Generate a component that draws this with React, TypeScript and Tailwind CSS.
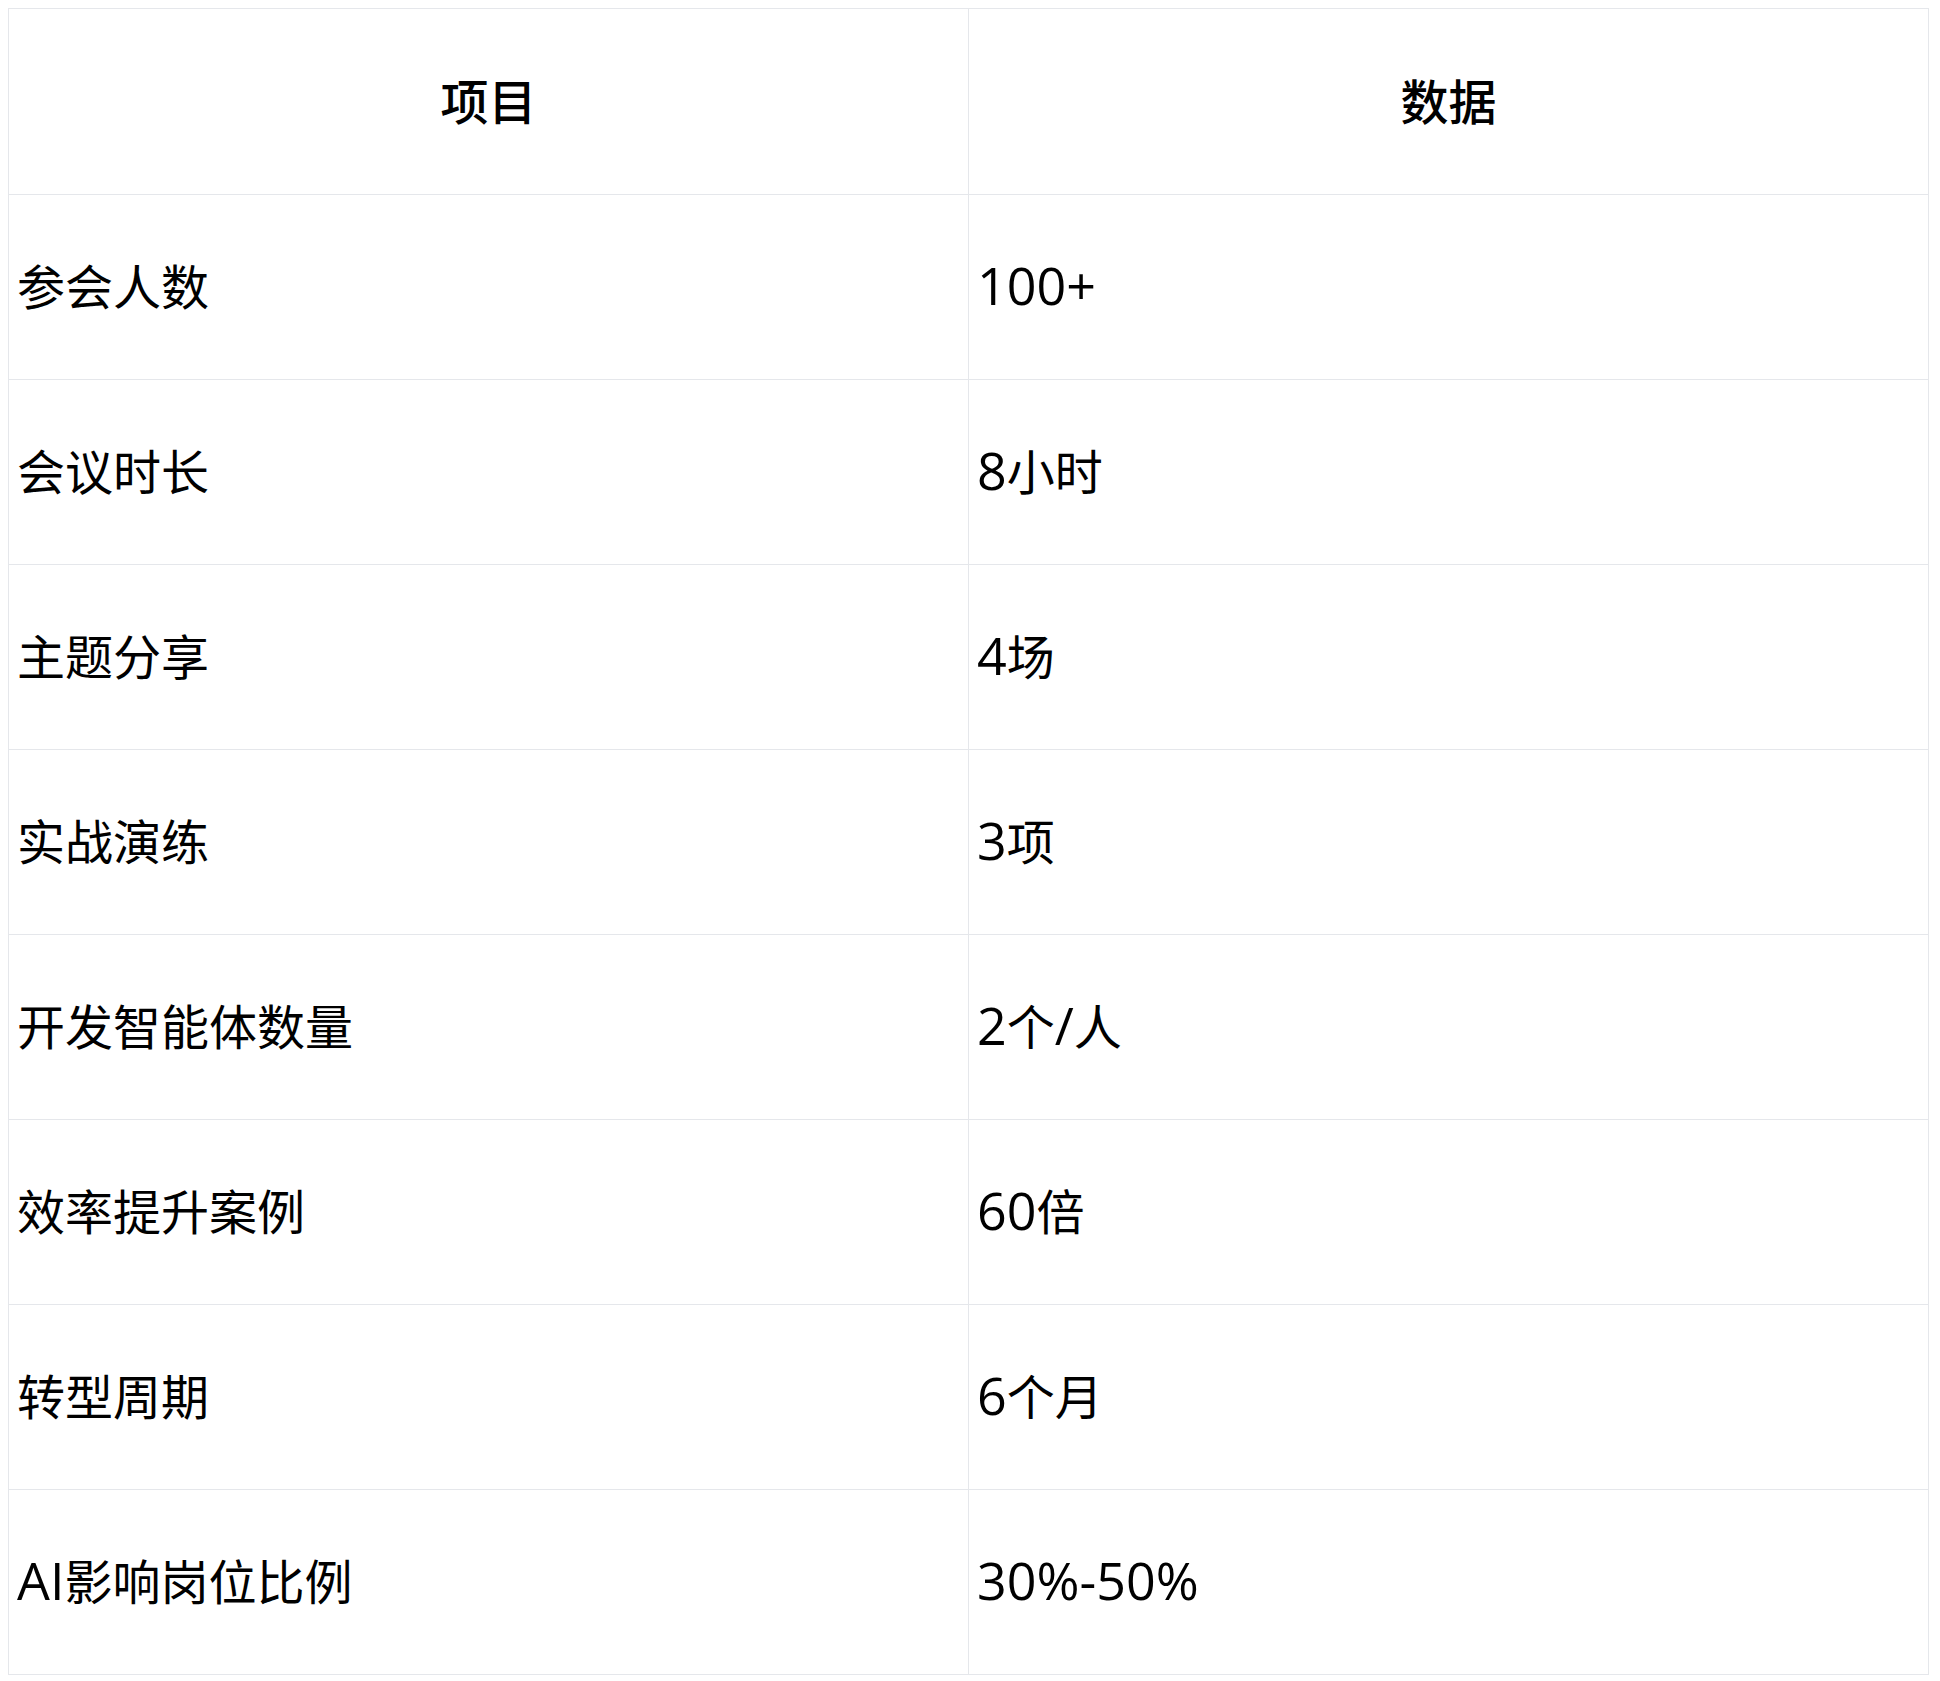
import React from "react";

const rows: [string, string][] = [
  ["参会人数", "100+"],
  ["会议时长", "8小时"],
  ["主题分享", "4场"],
  ["实战演练", "3项"],
  ["开发智能体数量", "2个/人"],
  ["效率提升案例", "60倍"],
  ["转型周期", "6个月"],
  ["AI影响岗位比例", "30%-50%"],
];

function Mixed({ text }: { text: string }) {
  const parts = text.match(/[\x00-\x7f]+|[^\x00-\x7f]+/g) || [];
  return (
    <>
      {parts.map((p, i) =>
        /^[\x00-\x7f]+$/.test(p) ? (
          <span key={i} className="text-[52px] leading-none">
            {p}
          </span>
        ) : (
          <span key={i}>{p}</span>
        )
      )}
    </>
  );
}

export default function App() {
  return (
    <div
      className="min-h-[1681px] bg-white pl-[8px] pt-[8px] text-black"
      style={{ fontFamily: '"Open Sans", "Noto Sans CJK SC", sans-serif' }}
    >
      <table className="w-[1921px] border-collapse table-fixed border border-[#e5e7eb] text-[48px]">
        <thead>
          <tr className="h-[186px]">
            <th className="w-[960px] border border-[#e5e7eb] px-2 text-center font-medium">项目</th>
            <th className="border border-[#e5e7eb] px-2 text-center font-medium">数据</th>
          </tr>
        </thead>
        <tbody>
          {rows.map(([a, b]) => (
            <tr key={a} className="h-[185px]">
              <td className="border border-[#e5e7eb] px-2 text-left">
                <Mixed text={a} />
              </td>
              <td className="border border-[#e5e7eb] px-2 text-left">
                <Mixed text={b} />
              </td>
            </tr>
          ))}
        </tbody>
      </table>
    </div>
  );
}
